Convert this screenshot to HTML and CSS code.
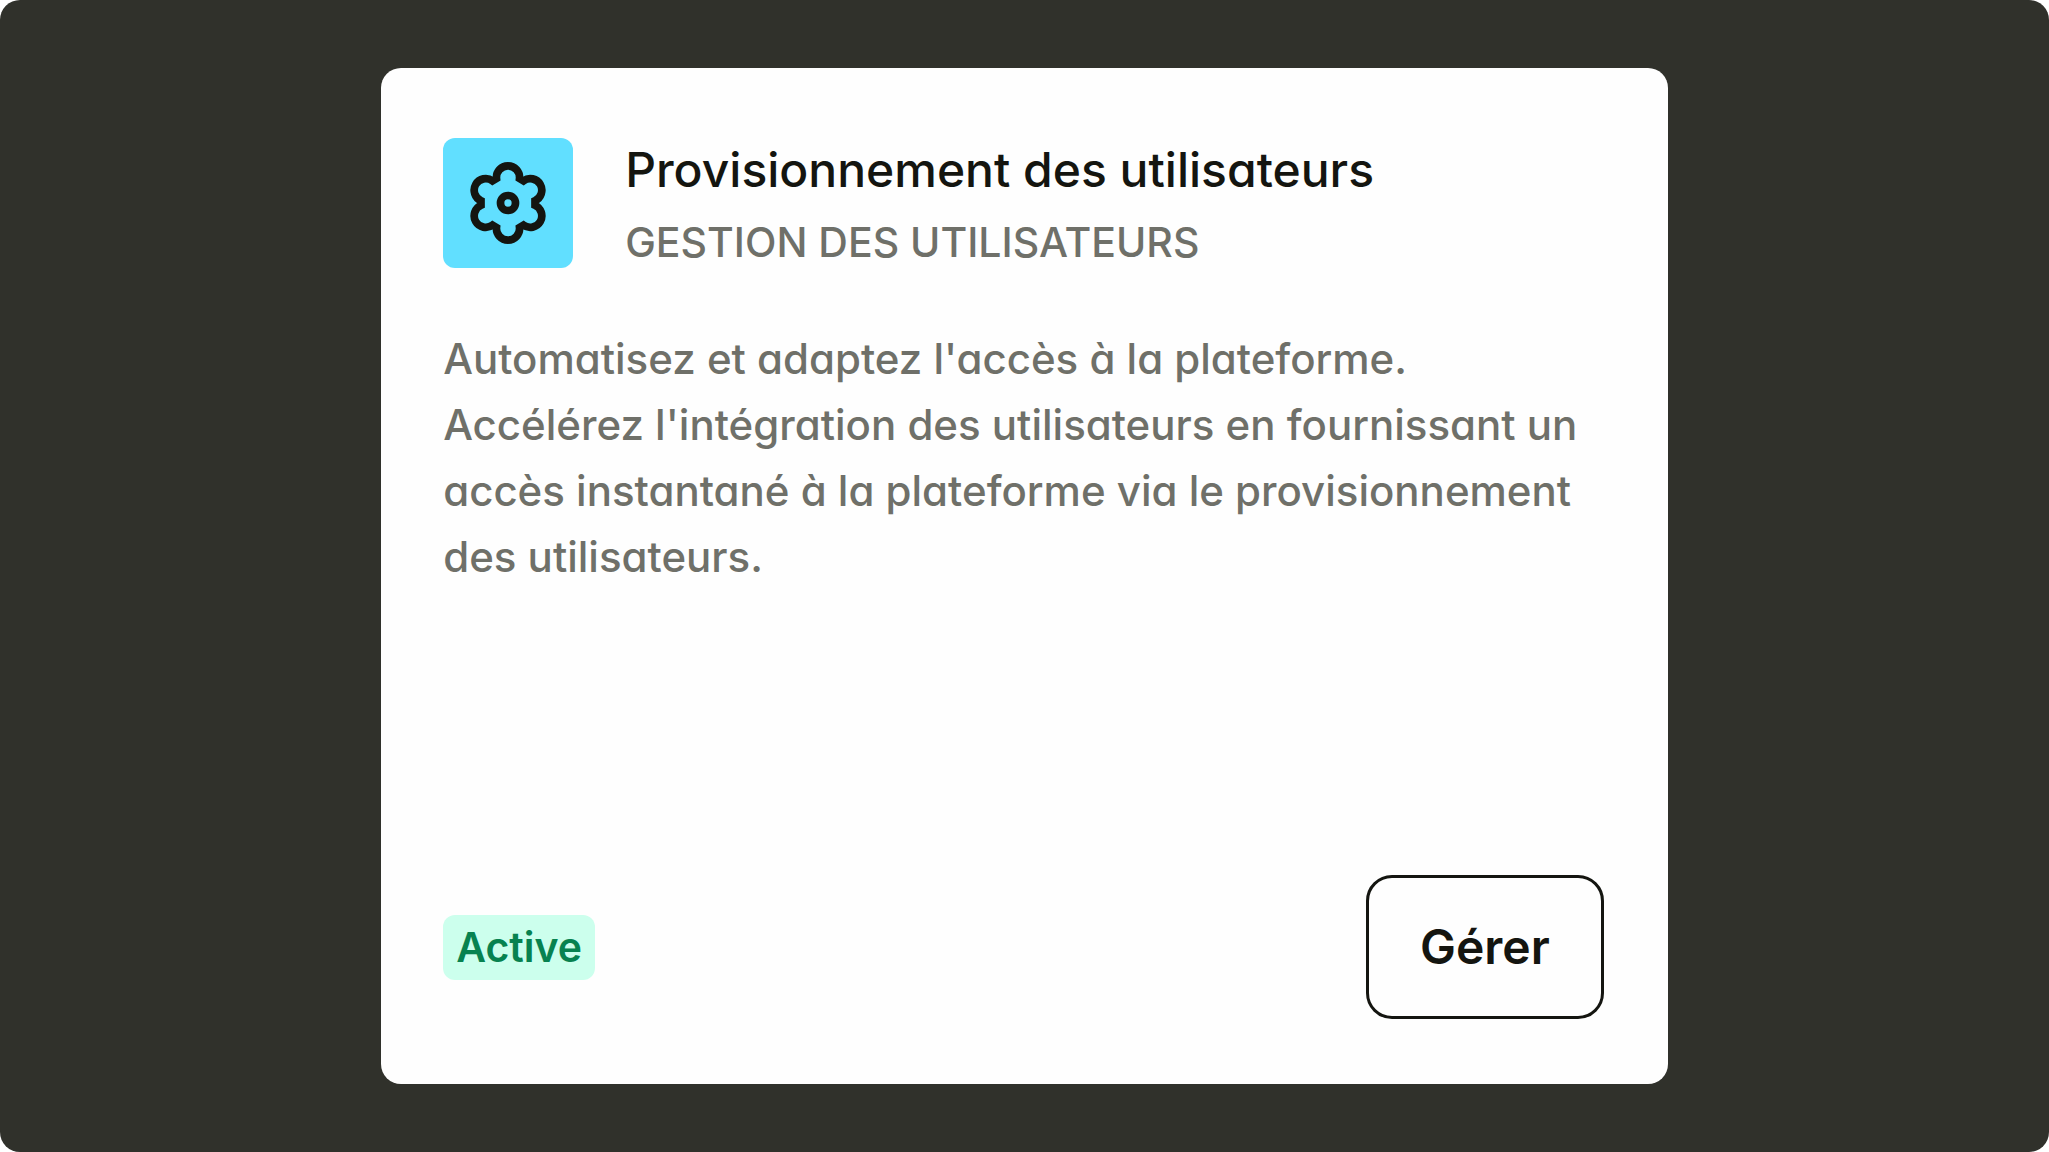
FILE: index.html
```html
<!DOCTYPE html>
<html lang="fr">
<head>
  <meta charset="utf-8">
  <meta name="viewport" content="width=device-width, initial-scale=1">
  <title>Provisionnement des utilisateurs</title>
  <link rel="stylesheet" href="styles.css">
</head>
<body>
  <main class="stage">
    <article class="card">
      <header class="card-header">
        <div class="card-icon">
          <svg viewBox="-65 -65 130 130" aria-hidden="true" fill="none" stroke="currentColor" stroke-width="7.7">
            <path d="M-11.5-24.5A11.55 11.55 0 1 1 11.5-24.5L15.5-22.2A11.55 11.55 0 1 1 27-2.3L27 2.3A11.55 11.55 0 1 1 15.5 22.2L11.5 24.5A11.55 11.55 0 1 1-11.5 24.5L-15.5 22.2A11.55 11.55 0 1 1-27 2.3L-27-2.3A11.55 11.55 0 1 1-15.5-22.2Z"/>
            <circle r="7.5"/>
          </svg>
        </div>
        <div class="card-heading">
          <h1 class="card-title">Provisionnement des utilisateurs</h1>
          <p class="card-category">GESTION DES UTILISATEURS</p>
        </div>
      </header>
      <p class="card-description">Automatisez et adaptez l'accès à la plateforme. Accélérez l'intégration des utilisateurs en fournissant un accès instantané à la plateforme via le provisionnement des utilisateurs.</p>
      <footer class="card-footer">
        <span class="badge">Active</span>
        <button class="button" type="button">Gérer</button>
      </footer>
    </article>
  </main>
</body>
</html>
```

FILE: styles.css
```css
* {
  box-sizing: border-box;
}

body {
  margin: 0;
  background: #fff;
  color: #141510;
  font-family: Inter, "Liberation Sans", sans-serif;
  font-feature-settings: "cv11";
}

.stage {
  display: flex;
  justify-content: center;
  min-height: 100vh;
  padding: 68px 24px;
  border-radius: 20px;
  background: #30312b;
}

.card {
  display: flex;
  flex-direction: column;
  width: 64.3%;
  padding: 70px 64px 65px 62px;
  border-radius: 20px;
  background: #fefefe;
}

.card-header {
  display: flex;
  gap: 52px;
}

.card-icon {
  flex: none;
  width: 130px;
  height: 130px;
  border-radius: 12px;
  background: #61dfff;
}

.card-icon svg {
  display: block;
}

.card-title,
.card-category,
.card-description {
  margin: 0;
  font-weight: 450;
}

.card-title {
  font-size: 48px;
  line-height: 64px;
}

.card-category {
  margin-top: 8px;
  color: #6f7069;
  font-size: 41px;
  line-height: 64px;
}

.card-description {
  margin-top: 52px;
  color: #6f7069;
  font-size: 42px;
  line-height: 66px;
}

.card-footer {
  display: flex;
  align-items: center;
  justify-content: space-between;
  margin-top: auto;
}

.badge {
  padding: 0 13px;
  border-radius: 12px;
  background: #ccffed;
  color: #078250;
  font-size: 41px;
  font-weight: 600;
  line-height: 65px;
}

.button {
  padding: 0 51px;
  border: 3px solid #141510;
  border-radius: 26px;
  background: transparent;
  color: inherit;
  font: inherit;
  font-feature-settings: inherit;
  font-size: 48px;
  font-weight: 600;
  line-height: 138px;
}
```
